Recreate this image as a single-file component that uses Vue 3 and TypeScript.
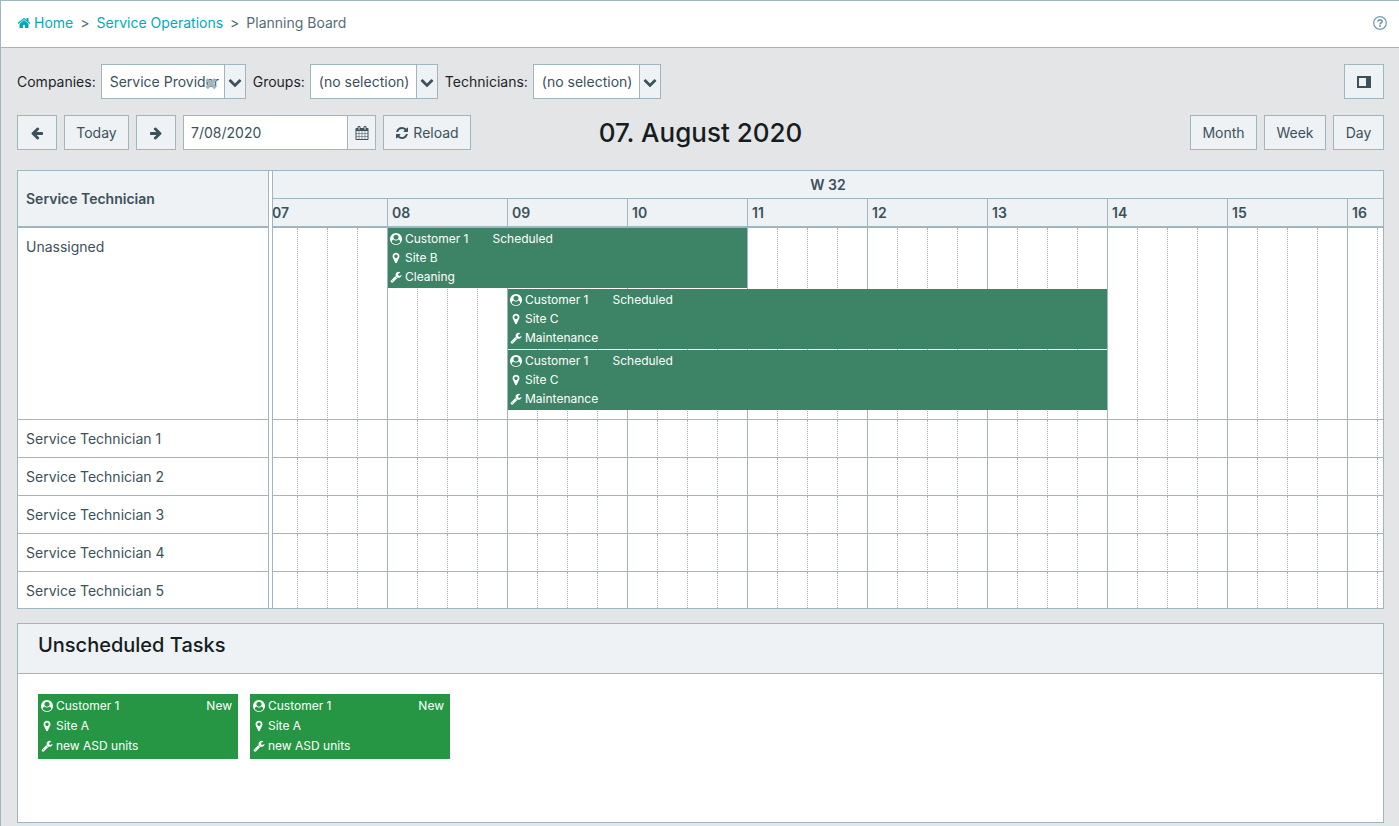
<script setup lang="ts">
import { ref } from 'vue'

interface Task {
  customer: string
  status: string
  site: string
  work: string
}
interface ScheduledTask extends Task {
  start: number
  end: number
  lane: number
}

const FIRST_HOUR = 7
const HOUR_WIDTH = 120
const LANE_HEIGHT = 61

const icons = {
  home: 'M1472 992v480q0 26-19 45t-45 19h-384v-384h-256v384h-384q-26 0-45-19t-19-45v-480q0-1 .5-3t.5-3l575-474 575 474q1 2 1 6zm223-69l-62 74q-8 9-21 11h-3q-13 0-21-7l-692-577-692 577q-12 8-24 7-13-2-21-11l-62-74q-8-10-7-23.5t11-21.5l719-599q32-26 76-26t76 26l244 204v-195q0-14 9-23t23-9h192q14 0 23 9t9 23v408l219 182q10 8 11 21.5t-7 23.5z',
  refresh: 'M1639 1056q0 5-1 7-64 268-268 434.5t-478 166.5q-146 0-282.5-55t-243.5-157l-129 129q-19 19-45 19t-45-19-19-45v-448q0-26 19-45t45-19h448q26 0 45 19t19 45-19 45l-137 137q71 66 161 102t187 36q134 0 250-65t186-179q11-17 53-117 8-23 30-23h192q13 0 22.5 9.5t9.5 22.5zm25-800v448q0 26-19 45t-45 19h-448q-26 0-45-19t-19-45 19-45l138-138q-148-137-349-137-134 0-250 65t-186 179q-11 17-53 117-8 23-30 23h-199q-13 0-22.5-9.5t-9.5-22.5v-7q65-268 270-434.5t480-166.5q146 0 284 55.5t245 156.5l130-129q19-19 45-19t45 19 19 45z',
  arrow: 'M1664 896v128q0 53-32.5 90.5t-84.5 37.5h-704l293 294q38 36 38 90t-38 90l-75 76q-37 37-90 37-52 0-91-37l-651-652q-37-37-37-90 0-52 37-91l651-650q38-38 91-38 52 0 90 38l75 74q38 38 38 91t-38 91l-293 293h704q52 0 84.5 37.5t32.5 90.5z',
  calendar: 'M192 1664h288v-288h-288v288zm352 0h320v-288h-320v288zm-352-352h288v-320h-288v320zm352 0h320v-320h-320v320zm-352-384h288v-288h-288v288zm736 736h320v-288h-320v288zm-384-736h320v-288h-320v288zm768 736h288v-288h-288v288zm-384-352h320v-320h-320v320zm-352-864v-288q0-13-9.5-22.5t-22.5-9.5h-64q-13 0-22.5 9.5t-9.5 22.5v288q0 13 9.5 22.5t22.5 9.5h64q13 0 22.5-9.5t9.5-22.5zm736 864h288v-320h-288v320zm-384-384h320v-288h-320v288zm384 0h288v-288h-288v288zm32-480v-288q0-13-9.5-22.5t-22.5-9.5h-64q-13 0-22.5 9.5t-9.5 22.5v288q0 13 9.5 22.5t22.5 9.5h64q13 0 22.5-9.5t9.5-22.5zm384-64v1280q0 52-38 90t-90 38h-1408q-52 0-90-38t-38-90v-1280q0-52 38-90t90-38h128v-96q0-66 47-113t113-47h64q66 0 113 47t47 113v96h384v-96q0-66 47-113t113-47h64q66 0 113 47t47 113v96h128q52 0 90 38t38 90z',
  chevron: 'M1683 808l-742 741q-19 19-45 19t-45-19l-742-741q-19-19-19-45.5t19-45.5l166-165q19-19 45-19t45 19l531 531 531-531q19-19 45-19t45 19l166 165q19 19 19 45.5t-19 45.5z',
  times: 'M1490 1322q0 40-28 68l-136 136q-28 28-68 28t-68-28l-294-294-294 294q-28 28-68 28t-68-28l-136-136q-28-28-28-68t28-68l294-294-294-294q-28-28-28-68t28-68l136-136q28-28 68-28t68 28l294 294 294-294q28-28 68-28t68 28l136 136q28 28 28 68t-28 68l-294 294 294 294q28 28 28 68z',
  user: 'M1523 1339q-22-155-87.5-257.5t-184.5-118.5q-67 74-159.5 115.5t-195.5 41.5-195.5-41.5-159.5-115.5q-119 16-184.5 118.5t-87.5 257.5q106 150 271 237.5t356 87.5 356-87.5 271-237.5zm-243-699q0-159-112.5-271.5t-271.5-112.5-271.5 112.5-112.5 271.5 112.5 271.5 271.5 112.5 271.5-112.5 112.5-271.5zm512 256q0 182-71 347.5t-190.5 286-285.5 191.5-349 71-349-71-285.5-191.5-190.5-286-71-347.5 71-348 191-286 286-191 348-71 348 71 286 191 191 286 71 348z',
  marker: 'M1152 640q0-106-75-181t-181-75-181 75-75 181 75 181 181 75 181-75 75-181zm256 0q0 109-33 179l-364 774q-16 33-47.5 52t-67.5 19-67.5-19-46.5-52l-365-774q-33-70-33-179 0-212 150-362t362-150 362 150 150 362z',
  wrench: 'M448 1472q0-26-19-45t-45-19-45 19-19 45 19 45 45 19 45-19 19-45zm644-420l-682 682q-37 37-90 37-52 0-91-37l-106-108q-38-36-38-90 0-53 38-91l681-681q39 98 114.5 173.5t173.5 114.5zm634-435q0 39-23 106-47 134-164.5 217.5t-258.5 83.5q-185 0-316.5-131.5t-131.5-316.5 131.5-316.5 316.5-131.5q58 0 121.5 16.5t107.5 46.5q16 11 16 28t-16 28l-293 169v224l193 107q5-3 79-48.5t135.5-81 70.5-35.5q15 0 23.5 10t8.5 25z',
}

const filters = [
  { id: 'companies', label: 'Companies:', value: 'Service Provider', clearable: true },
  { id: 'groups', label: 'Groups:', value: '(no selection)', clearable: false },
  { id: 'technicians', label: 'Technicians:', value: '(no selection)', clearable: false },
]
const views = ['Month', 'Week', 'Day']
const date = ref('7/08/2020')

const resources = [
  'Unassigned',
  'Service Technician 1',
  'Service Technician 2',
  'Service Technician 3',
  'Service Technician 4',
  'Service Technician 5',
]
const hours = Array.from({ length: 10 }, (_, i) => String(FIRST_HOUR + i).padStart(2, '0'))
const quarters = hours.length * 4

const scheduled: ScheduledTask[] = [
  { customer: 'Customer 1', status: 'Scheduled', site: 'Site B', work: 'Cleaning', start: 8, end: 11, lane: 0 },
  { customer: 'Customer 1', status: 'Scheduled', site: 'Site C', work: 'Maintenance', start: 9, end: 14, lane: 1 },
  { customer: 'Customer 1', status: 'Scheduled', site: 'Site C', work: 'Maintenance', start: 9, end: 14, lane: 2 },
]
const unscheduled: Task[] = [
  { customer: 'Customer 1', status: 'New', site: 'Site A', work: 'new ASD units' },
  { customer: 'Customer 1', status: 'New', site: 'Site A', work: 'new ASD units' },
]

function place(task: ScheduledTask) {
  return {
    left: `${(task.start - FIRST_HOUR) * HOUR_WIDTH + 1}px`,
    top: `${task.lane * LANE_HEIGHT}px`,
    width: `${(task.end - task.start) * HOUR_WIDTH - 1}px`,
  }
}
</script>

<template>
  <div class="page">
    <header class="topbar">
      <nav class="crumbs" aria-label="Breadcrumb">
        <a href="#home" class="home">
          <svg class="ico" viewBox="0 0 1792 1792"><path :d="icons.home" /></svg>Home</a>
        <span>&gt;</span>
        <a href="#operations">Service Operations</a>
        <span>&gt;</span>
        <span>Planning Board</span>
      </nav>
      <button class="help" aria-label="Help">
        <svg viewBox="0 0 14 14">
          <circle cx="7" cy="7" r="6.3" fill="none" stroke="currentColor" stroke-width="1.3" />
          <path d="M4.9 5.6C5 4.3 5.9 3.8 7 3.8c1.2 0 2.1.7 2.1 1.7 0 1.3-2 1.4-2 2.9" fill="none" stroke="currentColor" stroke-width="1.8" />
          <rect x="6.1" y="9.2" width="1.9" height="1.7" fill="currentColor" />
        </svg>
      </button>
    </header>

    <main class="content">
      <div class="bar filters">
        <div v-for="f in filters" :key="f.id" class="filter">
          <label :for="f.id">{{ f.label }}</label>
          <div class="combo">
            <select :id="f.id">
              <option>{{ f.value }}</option>
            </select>
            <button v-if="f.clearable" class="clear" aria-label="Clear company">
              <svg viewBox="0 0 1792 1792"><path :d="icons.times" /></svg>
            </button>
            <span class="caret"><svg viewBox="0 0 1792 1792"><path :d="icons.chevron" /></svg></span>
          </div>
        </div>
        <button class="btn icon push" aria-label="Toggle side panel">
          <svg class="panel-ico" viewBox="0 0 14 12">
            <path d="M0 0h14v12H0zM2 2v8h7V2z" fill-rule="evenodd" />
          </svg>
        </button>
      </div>

      <div class="bar dates">
        <div class="group">
          <button class="btn icon" aria-label="Previous day">
            <svg class="ico" viewBox="0 0 1792 1792"><path :d="icons.arrow" /></svg>
          </button>
          <button class="btn today">Today</button>
          <button class="btn icon" aria-label="Next day">
            <svg class="ico flip" viewBox="0 0 1792 1792"><path :d="icons.arrow" /></svg>
          </button>
          <div class="date">
            <input v-model="date" type="text" aria-label="Date" />
            <button aria-label="Open calendar">
              <svg class="ico" viewBox="0 0 1792 1792"><path :d="icons.calendar" /></svg>
            </button>
          </div>
          <button class="btn reload">
            <svg class="ico" viewBox="0 0 1792 1792"><path :d="icons.refresh" /></svg>Reload
          </button>
        </div>
        <h1>07. August 2020</h1>
        <div class="group end">
          <button v-for="v in views" :key="v" class="btn" :class="v.toLowerCase()">{{ v }}</button>
        </div>
      </div>

      <section class="board" aria-label="Schedule">
        <table class="people">
          <thead>
            <tr><th>Service Technician</th></tr>
          </thead>
          <tbody>
            <tr v-for="r in resources" :key="r"><td>{{ r }}</td></tr>
          </tbody>
        </table>
        <div class="timeline">
          <div class="week-row">W 32</div>
          <div class="scroll">
            <table class="slots">
              <thead>
                <tr><th v-for="h in hours" :key="h" colspan="4">{{ h }}</th></tr>
              </thead>
              <tbody>
                <tr v-for="r in resources" :key="r"><td v-for="q in quarters" :key="q"></td></tr>
              </tbody>
            </table>
            <div class="events">
              <article v-for="t in scheduled" :key="t.lane" class="task event" :style="place(t)">
                <p>
                  <svg viewBox="0 0 1792 1792"><path :d="icons.user" /></svg>
                  <span>{{ t.customer }}</span><span class="status">{{ t.status }}</span>
                </p>
                <p><svg viewBox="0 0 1792 1792"><path :d="icons.marker" /></svg>{{ t.site }}</p>
                <p><svg viewBox="0 0 1792 1792"><path :d="icons.wrench" /></svg>{{ t.work }}</p>
              </article>
            </div>
          </div>
        </div>
      </section>

      <section class="backlog">
        <h2>Unscheduled Tasks</h2>
        <div class="cards">
          <article v-for="(t, i) in unscheduled" :key="i" class="task card">
            <p>
              <svg viewBox="0 0 1792 1792"><path :d="icons.user" /></svg>
              <span>{{ t.customer }}</span><span class="status">{{ t.status }}</span>
            </p>
            <p><svg viewBox="0 0 1792 1792"><path :d="icons.marker" /></svg>{{ t.site }}</p>
            <p><svg viewBox="0 0 1792 1792"><path :d="icons.wrench" /></svg>{{ t.work }}</p>
          </article>
        </div>
      </section>
    </main>
  </div>
</template>

<style>
body {
  background: #e4e5e7;
}
</style>

<style scoped>
* {
  box-sizing: border-box;
}
.page {
  --line: #9fb6be;
  --soft: #eef2f5;
  --ink: #3c515a;
  display: flex;
  flex-direction: column;
  min-height: 100vh;
  border-top: 1px solid var(--line);
  border-left: 1px solid var(--line);
  color: var(--ink);
  font: 14px/20px Inter, "Liberation Sans", sans-serif;
}
svg {
  display: block;
  flex: none;
  fill: currentColor;
}
.ico {
  width: 14px;
  height: 14px;
}
button,
input,
select {
  margin: 0;
  padding: 0;
  border: 0;
  border-radius: 0;
  color: inherit;
  font: inherit;
}
.topbar {
  display: flex;
  align-items: center;
  justify-content: space-between;
  height: 47px;
  padding: 0 12px 2px 16px;
  border-bottom: 1px solid var(--line);
  background: #fff;
}
.crumbs {
  display: flex;
  gap: 7px;
  color: #546e7a;
}
.crumbs a {
  color: #00abb9;
  text-decoration: none;
}
.crumbs .home {
  display: flex;
  align-items: center;
  gap: 3px;
}
.help {
  background: none;
  color: #78a0ae;
}
.help svg {
  width: 14px;
  height: 14px;
}
.content {
  display: flex;
  flex: 1;
  flex-direction: column;
  padding: 16px 15px 3px 16px;
}
.bar {
  display: flex;
  align-items: center;
  height: 35px;
}
.filters {
  gap: 7px;
  margin-bottom: 16px;
}
.filter {
  display: flex;
  align-items: center;
  gap: 5px;
  color: #1b2529;
}
.combo {
  display: flex;
  position: relative;
  width: 128px;
  height: 35px;
  border: 1px solid var(--line);
  background: #fff;
  color: var(--ink);
}
.filter:first-child .combo {
  width: 145px;
}
.combo select {
  flex: 1;
  width: 100%;
  padding: 0 8px;
  appearance: none;
  background: transparent;
}
.caret {
  display: grid;
  position: absolute;
  inset: 0 0 0 auto;
  width: 21px;
  place-items: center;
  border-left: 1px solid var(--line);
  background: var(--soft);
  pointer-events: none;
}
.caret svg {
  width: 14px;
  height: 14px;
}
.clear {
  position: absolute;
  top: 10px;
  right: 26px;
  background: none;
  color: #9db8c1;
}
.clear svg {
  width: 16px;
  height: 16px;
}
.btn {
  display: flex;
  align-items: center;
  justify-content: center;
  height: 35px;
  border: 1px solid var(--line);
  background: var(--soft);
}
.icon {
  width: 40px;
}
.today {
  width: 65px;
}
.reload {
  gap: 4px;
  width: 88px;
}
.month {
  width: 67px;
}
.week {
  width: 62px;
}
.day {
  width: 51px;
}
.push {
  margin-left: auto;
}
.panel-ico {
  width: 14px;
  height: 12px;
}
.dates {
  display: grid;
  grid-template-columns: 1fr auto 1fr;
  margin-bottom: 20px;
}
.group {
  display: flex;
  gap: 7px;
}
.end {
  justify-content: flex-end;
}
.flip {
  transform: scaleX(-1);
}
.date {
  display: flex;
  width: 193px;
  height: 35px;
  border: 1px solid var(--line);
}
.date input {
  flex: 1;
  min-width: 0;
  padding: 0 7px;
  background: #fff;
}
.date button {
  display: grid;
  width: 28px;
  place-items: center;
  border-left: 1px solid var(--line);
  background: var(--soft);
}
h1,
h2,
p {
  margin: 0;
}
h1 {
  color: #161d20;
  font-size: 26px;
  font-weight: 500;
  line-height: 35px;
}
.board {
  display: flex;
  gap: 3px;
  border: 1px solid var(--line);
  background: #fff;
}
table {
  border-spacing: 0;
  table-layout: fixed;
}
th,
td {
  padding: 0;
  text-align: left;
  vertical-align: top;
}
th {
  border-bottom: 2px solid var(--line);
  background: var(--soft);
  font-weight: 600;
}
.people {
  width: 251px;
  flex: none;
  border-right: 1px solid var(--line);
}
.people th {
  height: 57px;
  padding-left: 8px;
  vertical-align: middle;
}
td {
  height: 38px;
  border-bottom: 1px solid var(--line);
}
.people td {
  padding: 9px 8px 0;
}
tbody tr:first-child td {
  height: 192px;
}
tbody tr:last-child td {
  height: 36px;
  border-bottom: 0;
}
.timeline {
  flex: 1;
  min-width: 0;
  overflow: hidden;
  border-left: 1px solid var(--line);
}
.week-row {
  height: 28px;
  border-bottom: 1px solid var(--line);
  background: var(--soft);
  font-weight: 600;
  line-height: 28px;
  text-align: center;
}
.scroll {
  position: relative;
  margin-left: -6px;
}
.slots {
  width: 1200px;
}
.slots th {
  height: 29px;
  padding-left: 4px;
  border-left: 1px solid var(--line);
  line-height: 27px;
}
.slots td {
  border-left: 1px dotted #a3b1b5;
}
.slots td:nth-child(4n + 1) {
  border-left: 1px solid var(--line);
}
.events {
  position: absolute;
  top: 29px;
  left: 0;
}
.task {
  color: #fff;
  font-size: 12px;
}
.task p {
  display: flex;
  align-items: center;
  gap: 3px;
}
.task svg {
  width: 12px;
  height: 12px;
}
.event {
  position: absolute;
  height: 60px;
  padding: 1px 2px;
  background: #3c8465;
  line-height: 19px;
}
.status {
  margin-left: 21px;
}
.backlog {
  display: flex;
  flex: 1;
  flex-direction: column;
  margin-top: 14px;
  border: 1px solid var(--line);
  background: #fff;
}
h2 {
  height: 50px;
  padding: 8px 20px;
  border-bottom: 1px solid var(--line);
  background: var(--soft);
  color: #161d20;
  font-size: 20px;
  font-weight: 500;
  line-height: 26px;
}
.cards {
  display: flex;
  flex-wrap: wrap;
  gap: 12px;
  padding: 20px;
}
.card {
  width: 200px;
  height: 65px;
  padding: 2px 6px 3px 3px;
  background: #269644;
  line-height: 20px;
}
.card .status {
  margin-left: auto;
}
</style>
